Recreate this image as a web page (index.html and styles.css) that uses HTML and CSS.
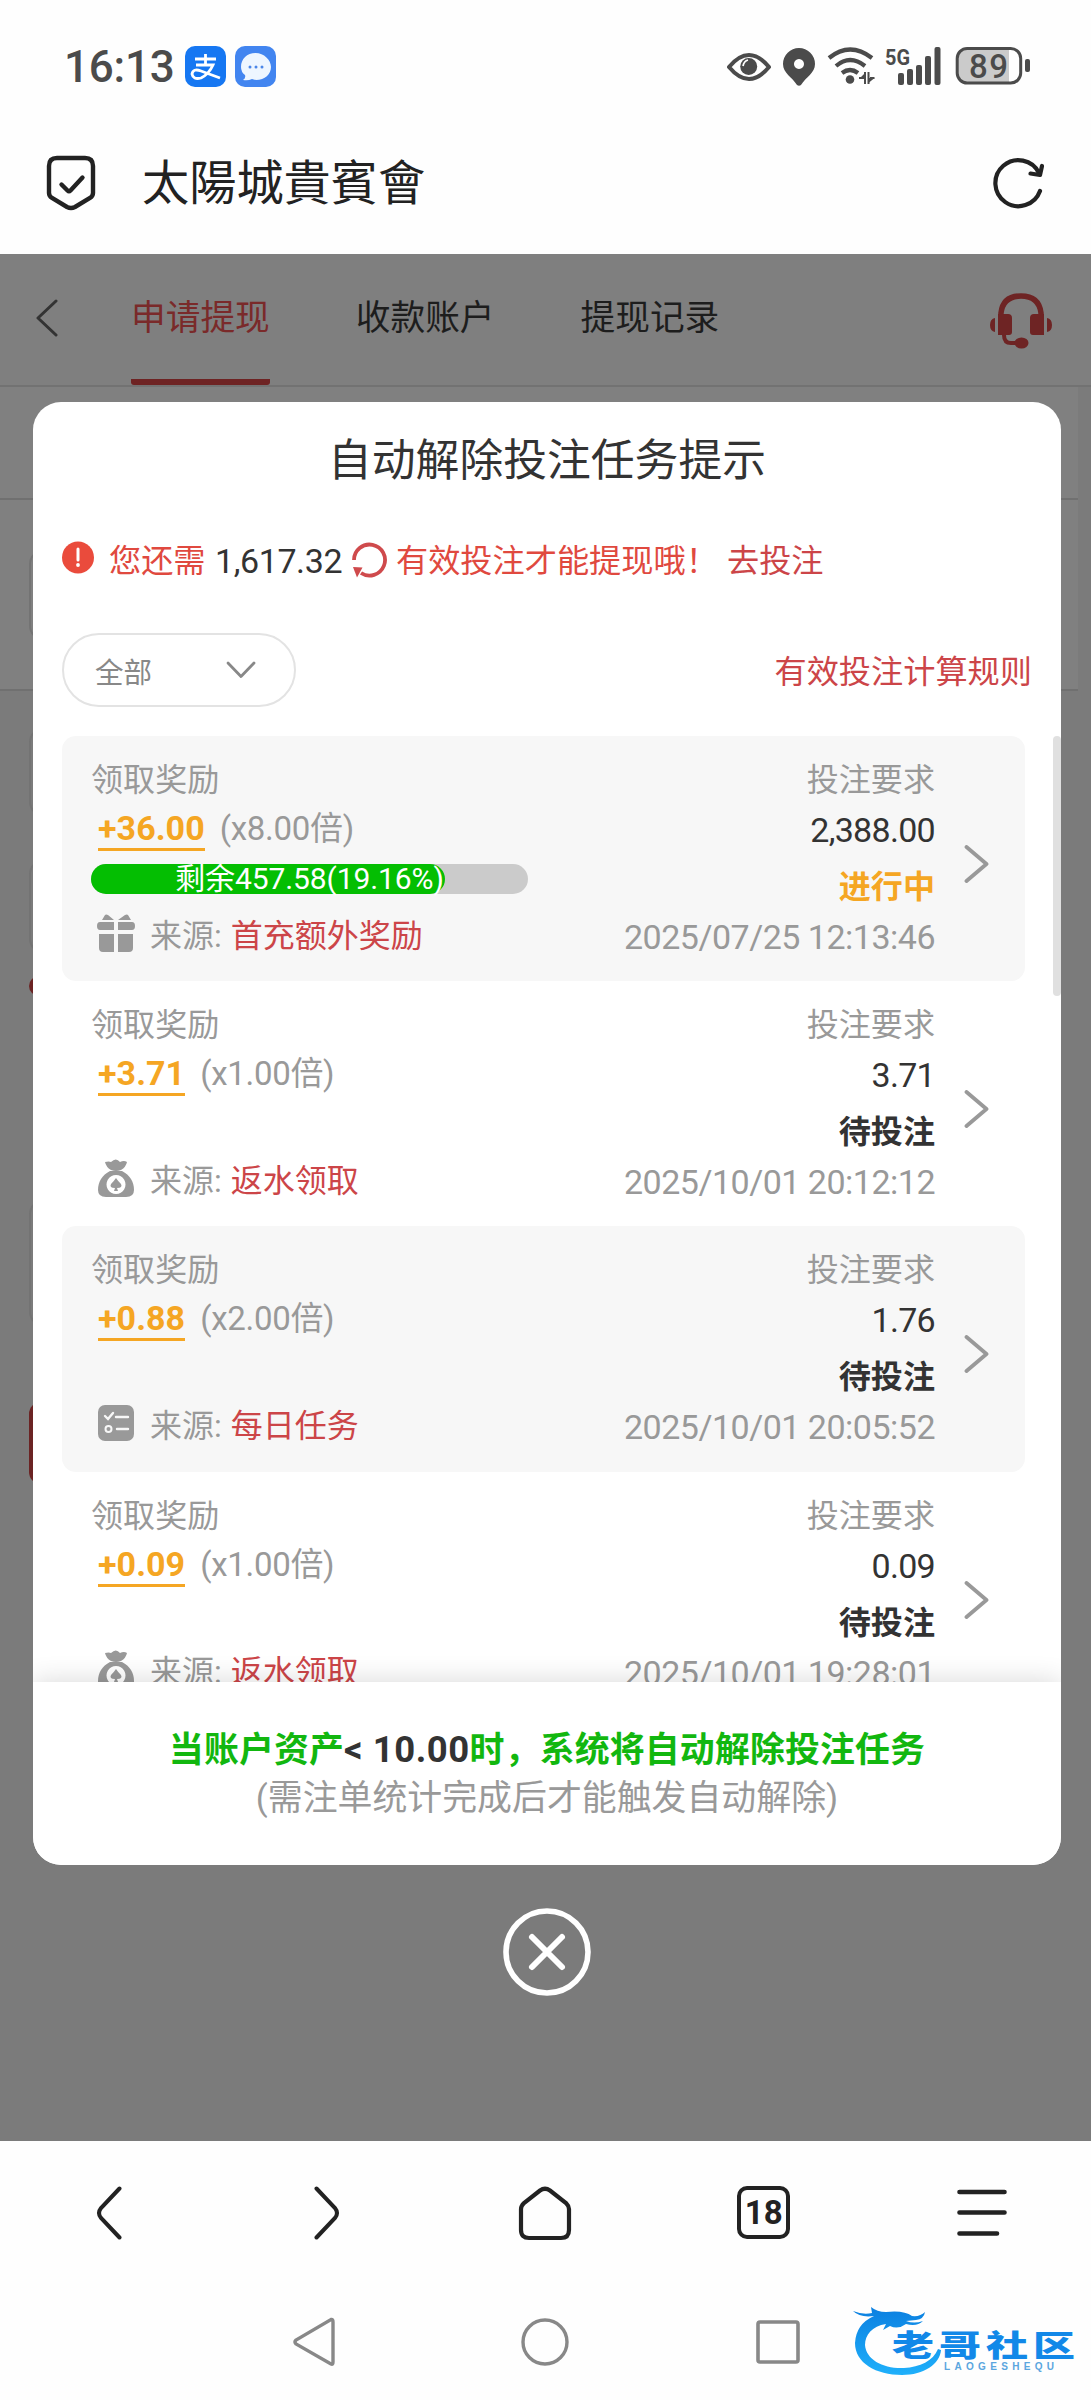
FILE: index.html
```html
<!DOCTYPE html>
<html lang="zh-CN">
<head>
<meta charset="utf-8">
<title>太陽城貴賓會</title>
<link rel="stylesheet" href="styles.css">
</head>
<body>
<svg width="0" height="0" class="defs">
  <symbol id="bag" viewBox="0 0 38 38">
    <path fill="currentColor" d="M8 3q4-1 6 0q5-5 9 0q4-2 7 0q-1 5-6 8q-5 2-10 0q-5-3-6-8z"/>
    <path fill="currentColor" fill-rule="evenodd" d="M13 12h12c8 4 12 11 12 19q0 7-8 7H9q-8 0-8-7c0-8 4-15 12-19zM19 16a9.500 9.500 0 1 0 .01 0z"/>
    <path fill="currentColor" d="M19 19q2 3 5 6q2 4-4 4l1 3h-4l1-3q-6 0-4-4q3-3 5-6z"/>
  </symbol>
  <symbol id="next" viewBox="0 0 24 38"><path d="M2 2L22 19L2 36" fill="none" stroke="#999" stroke-width="3.800" stroke-linecap="round" stroke-linejoin="round"/></symbol>
</svg>
<div class="phone">
  <div class="status">
    <span class="clock">16:13</span>
    <svg class="app" width="41" height="41" viewBox="0 0 41 41"><rect width="41" height="41" rx="10" fill="#1677f2"/><path d="M10 13H31M20.500 8v11M11 19H28Q24 28 16 32Q8 34 7 28Q8 22 16 25L35 32" fill="none" stroke="#fff" stroke-width="2.800"/></svg>
    <svg class="app" width="41" height="41" viewBox="0 0 41 41"><rect width="41" height="41" rx="10" fill="#4285f0"/><path d="M20.500 7C12 7 6 13 6 21q0 5 4 8q1 3-2 5q5 1 9-1q3 1 4 1c9 0 15-6 15-13S29 7 20.500 7z" fill="#eef6ff"/><g fill="#4a86e8"><circle cx="15" cy="21" r="1.500"/><circle cx="21" cy="21" r="1.500"/><circle cx="27" cy="21" r="1.500"/></g></svg>
    <svg class="signals" width="304" height="44" viewBox="727 44 304 44">
      <path d="M729 67Q749 43 769 67Q749 91 729 67z" fill="none" stroke="#4b4b4b" stroke-width="4" stroke-linejoin="round"/><circle cx="748.700" cy="66.500" r="8.500" fill="#4b4b4b"/><path d="M743 66q1-5 5-6" fill="none" stroke="#fff" stroke-width="1.800"/>
      <path d="M799 48a16 16 0 0 0-16 16c0 9 9 13 14 21q2 1.500 4 0c5-8 14-12 14-21a16 16 0 0 0-16-16zm0 11a5 5 0 1 1-.01 0z" fill="#4b4b4b" fill-rule="evenodd"/>
      <g fill="none" stroke="#4b4b4b" stroke-width="4.200"><path d="M829 58Q850 41 872 58"/><path d="M836 66Q850 54 865 66"/><path d="M842 73Q850 67 858 73"/></g><circle cx="850" cy="79.500" r="4.300" fill="#4b4b4b"/>
      <path d="M859 78h4.500M865 72v12M868.500 72v12M870 78h4.500" fill="none" stroke="#4b4b4b" stroke-width="2"/><path d="M859 79l6-6v6zM868.500 83l6-5h-6z" fill="#4b4b4b"/>
      <text x="885" y="65" class="fiveg" textLength="25" lengthAdjust="spacingAndGlyphs">5G</text>
      <g fill="#4b4b4b"><rect x="898" y="73" width="6" height="12" rx="2"/><rect x="907" y="69" width="6" height="16" rx="2"/><rect x="916" y="65" width="6" height="20" rx="2"/><rect x="925" y="56" width="6" height="29" rx="2"/><rect x="934.500" y="47" width="6" height="38" rx="2"/></g>
      <path d="M968 49h41v33h-41q-10 0-10-10v-13q0-10 10-10z" fill="#cbcbcb"/><rect x="957.200" y="48.500" width="63.500" height="34.500" rx="10" fill="none" stroke="#4b4b4b" stroke-width="3"/><rect x="1025" y="59" width="5" height="13" rx="2" fill="#4b4b4b"/>
      <text x="969" y="78" class="level" textLength="39">89</text>
    </svg>
  </div>
  <div class="address">
    <svg class="shield" width="50" height="56" viewBox="0 0 50 56"><path d="M11 3H39Q47 3 47 11V38Q47 41 44 43L29 52Q25 54 21 52L6 43Q3 41 3 38V11Q3 3 11 3z" fill="none" stroke="#222" stroke-width="4.400"/><path d="M15.500 29.500l6 6q1.500 1.500 3 0l12-13" fill="none" stroke="#222" stroke-width="4.400" stroke-linecap="round"/></svg>
    <span class="site">太陽城貴賓會</span>
    <svg class="reload" width="52" height="54" viewBox="0 0 52 54"><path d="M47 35A23 23 0 1 1 46 17" fill="none" stroke="#222" stroke-width="4.200" stroke-linecap="round"/><path d="M49 10L47 19L37.500 17.500" fill="none" stroke="#222" stroke-width="4.200" stroke-linecap="round" stroke-linejoin="round"/></svg>
  </div>

  <div class="stage">
    <div class="tabs">
      <svg class="back" width="22" height="38" viewBox="0 0 22 38"><path d="M20 2L2 19L20 36" fill="none" stroke="#333" stroke-width="3" stroke-linecap="round" stroke-linejoin="round"/></svg>
      <span class="tab on">申请提现</span><span class="tab">收款账户</span><span class="tab">提现记录</span>
      <svg class="headset" width="62" height="56" viewBox="0 0 62 56"><path d="M11 24V20Q13 3 31 3T51 20V24" fill="none" stroke="#6e2424" stroke-width="5.500"/><path d="M8 21H18q4 0 4 4V39q0 3-3 3H8zM54 21H44q-4 0-4 4V39q0 3 3 3h11zM5 25v14q-5-1-5-7t5-7zM57 25v14q5-1 5-7t-5-7z" fill="#6e2424"/><path d="M14 42Q14 50 21 50H28" fill="none" stroke="#6e2424" stroke-width="4"/><ellipse cx="31.500" cy="50" rx="7" ry="5.500" fill="#6e2424"/></svg>
    </div>
    <div class="panel head"></div>
    <div class="panel field"><div class="box"></div></div>
    <div class="form">
      <div class="box a"></div><div class="box b"></div><div class="dot"></div><div class="box c"></div><div class="submit"></div>
    </div>

    <div class="modal">
      <h1>自动解除投注任务提示</h1>
      <div class="notice">
        <svg class="warn" width="32" height="33" viewBox="0 0 32 33"><circle cx="16" cy="16.500" r="16" fill="#ea4b3c"/><path d="M16 8v11" stroke="#fff" stroke-width="3" stroke-linecap="round"/><circle cx="16" cy="24" r="1.900" fill="#fff"/></svg>
        <span class="need">您还需</span><span class="sum">1,617.32</span>
        <svg class="sync" width="35" height="36" viewBox="0 0 35 36"><path d="M2 18A15.500 15.500 0 1 1 9 31" fill="none" stroke="#cf4a4c" stroke-width="3.800"/><path d="M1 25L10.500 25.500L5 35.500z" fill="#cf4a4c"/></svg>
        <span class="must">有效投注才能提现哦！</span><span class="go">去投注</span>
      </div>
      <div class="filter">
        <div class="select">全部<svg width="30" height="18" viewBox="0 0 30 18"><path d="M2 2L15 15.500L28 2" fill="none" stroke="#888" stroke-width="2.800" stroke-linecap="round" stroke-linejoin="round"/></svg></div>
        <span class="rules">有效投注计算规则</span>
      </div>
      <div class="list">
        <div class="item shade">
          <div class="left">
            <div class="label">领取奖励</div>
            <div class="reward"><b>+36.00</b><span>(x8.00倍)</span></div>
            <div class="bar"><div class="fill" style="width:81%"></div><span>剩余457.58(19.16%)</span></div>
            <div class="source"><svg width="38" height="38" viewBox="0 0 38 38"><path fill="#999" d="M5 6l3-5q1-1 3 0l6 5zM21 6l7-5q2-1 3 0l3 5zM3 8h14v8H3q-3 0-3-4t3-4zm18 0h14q3 0 3 4t-3 4H21zM2 20h15v18H6q-4 0-4-4zm19 0h15v14q0 4-4 4H21z"/></svg>来源:<em>首充额外奖励</em></div>
          </div>
          <div class="right"><div class="label">投注要求</div><div class="value">2,388.00</div><div class="state active">进行中</div><div class="date">2025/07/25 12:13:46</div></div>
          <svg class="next" width="25" height="38"><use href="#next"/></svg>
        </div>
        <div class="item">
          <div class="left">
            <div class="label">领取奖励</div>
            <div class="reward"><b>+3.71</b><span>(x1.00倍)</span></div>
            <div class="bar none"></div>
            <div class="source"><svg width="38" height="38"><use href="#bag"/></svg>来源:<em>返水领取</em></div>
          </div>
          <div class="right"><div class="label">投注要求</div><div class="value">3.71</div><div class="state">待投注</div><div class="date">2025/10/01 20:12:12</div></div>
          <svg class="next" width="25" height="38"><use href="#next"/></svg>
        </div>
        <div class="item shade">
          <div class="left">
            <div class="label">领取奖励</div>
            <div class="reward"><b>+0.88</b><span>(x2.00倍)</span></div>
            <div class="bar none"></div>
            <div class="source"><svg width="38" height="38" viewBox="0 0 38 38"><rect x="1" y="1" width="36" height="36" rx="7" fill="#999"/><path d="M8 12l3 3l5-6M19 13h12M20 25h11" fill="none" stroke="#f7f7f7" stroke-width="2.400" stroke-linecap="round"/><circle cx="11.500" cy="25" r="3" fill="none" stroke="#f7f7f7" stroke-width="2"/></svg>来源:<em>每日任务</em></div>
          </div>
          <div class="right"><div class="label">投注要求</div><div class="value">1.76</div><div class="state">待投注</div><div class="date">2025/10/01 20:05:52</div></div>
          <svg class="next" width="25" height="38"><use href="#next"/></svg>
        </div>
        <div class="item">
          <div class="left">
            <div class="label">领取奖励</div>
            <div class="reward"><b>+0.09</b><span>(x1.00倍)</span></div>
            <div class="bar none"></div>
            <div class="source"><svg width="38" height="38"><use href="#bag"/></svg>来源:<em>返水领取</em></div>
          </div>
          <div class="right"><div class="label">投注要求</div><div class="value">0.09</div><div class="state">待投注</div><div class="date">2025/10/01 19:28:01</div></div>
          <svg class="next" width="25" height="38"><use href="#next"/></svg>
        </div>
        <div class="thumb"></div>
      </div>
      <div class="foot">
        <div class="rule">当账户资产<span>&lt; 10.00</span>时，系统将自动解除投注任务</div>
        <div class="hint">(需注单统计完成后才能触发自动解除)</div>
      </div>
    </div>
    <svg class="close" width="88" height="88" viewBox="0 0 88 88"><circle cx="44" cy="44" r="41" fill="none" stroke="#fff" stroke-width="5.600"/><path d="M29 29L59 59M59 29L29 59" stroke="#fff" stroke-width="6" stroke-linecap="round"/></svg>
  </div>

  <div class="toolbar">
    <svg width="26" height="56" viewBox="0 0 26 56"><path d="M23.500 3.500L5 23Q1 28 5 33L23.500 52.500" fill="none" stroke="#222" stroke-width="4" stroke-linecap="round"/></svg>
    <svg width="26" height="56" viewBox="0 0 26 56"><path d="M2.500 3.500L21 23Q25 28 21 33L2.500 52.500" fill="none" stroke="#222" stroke-width="4" stroke-linecap="round"/></svg>
    <svg width="54" height="56" viewBox="0 0 54 56"><path d="M22 5.500Q27 2 32 5.500L48 18Q51 21 51 24V45Q51 53 43 53H11Q3 53 3 45V24Q3 21 6 18z" fill="none" stroke="#222" stroke-width="4.200"/></svg>
    <span class="count">18</span>
    <svg width="50" height="48" viewBox="0 0 50 48"><path d="M2.500 3H47.500M2.500 23.500H47.500M2.500 44.500H40" stroke="#222" stroke-width="4.600" stroke-linecap="round"/></svg>
  </div>
  <div class="system">
    <svg class="tri" width="42" height="50" viewBox="0 0 42 50"><path d="M38 2.500Q40 2 40 5V45Q40 48 38 47L3 27Q1 25 3 23z" fill="none" stroke="#888" stroke-width="3.400"/></svg>
    <svg class="round" width="48" height="48" viewBox="0 0 48 48"><circle cx="24" cy="24" r="22" fill="none" stroke="#888" stroke-width="3.400"/></svg>
    <svg class="square" width="44" height="44" viewBox="0 0 44 44"><rect x="2" y="2" width="40" height="40" rx="2" fill="none" stroke="#888" stroke-width="3.600"/></svg>
    <svg class="brand" width="232" height="80" viewBox="850 2300 232 80">
      <defs><linearGradient id="blue" x1="0" y1="0" x2="0" y2="1"><stop offset="0" stop-color="#0b7fe0"/><stop offset="1" stop-color="#1fb0fb"/></linearGradient></defs>
      <path fill="url(#blue)" d="M853 2309Q863 2313 872 2311L871 2305Q877 2310 886 2310Q904 2308 912 2314Q920 2315 925 2310Q924 2317 916 2318L906 2319Q914 2322 923 2319Q917 2325 906 2322Q898 2328 890 2324L883 2328L886 2322C872 2324 865 2333 865 2343C866 2358 884 2367 904 2366C920 2365 933 2359 938 2347L941 2348C940 2362 924 2373 902 2373C876 2373 855 2361 855 2341Q856 2322 874 2314Q860 2316 853 2309z"/>
      <g transform="translate(0 2354) scale(1 .7)"><text class="brandname" x="892" y="0" fill="#1288e8">老哥社区</text></g>
      <text class="brandsub" x="944" y="2368" textLength="110">LAOGESHEQU</text>
    </svg>
  </div>
</div>
</body>
</html>
```
FILE: styles.css
```css
* { box-sizing: border-box; }
body { margin: 0; background: #fff; font-family: Roboto, "Noto Sans CJK SC", sans-serif; color: #333; }
svg { display: block; flex: none; }
.defs { position: absolute; }
.phone { width: 1091px; height: 2400px; overflow: hidden; background: #fefefe; }

.status { display: flex; align-items: center; height: 132px; padding-left: 64px; }
.clock { width: 121px; margin-top: 2px; font-size: 44px; font-weight: 500; color: #4b4b4b; letter-spacing: -.2px; white-space: nowrap; }
.app { margin-right: 9px; }
.signals { margin-left: 442px; }
.fiveg { font: 700 22px Roboto, sans-serif; fill: #4b4b4b; }
.level { font: 500 33px Roboto, sans-serif; fill: #4b4b4b; }

.address { display: flex; align-items: center; height: 122px; padding: 0 46px 20px 46px; }
.site { margin: 2px 0 0 46px; font-size: 47.200px; line-height: 60px; color: #222; }
.reload { margin-left: auto; }

.stage { position: relative; height: 1887px; background: #7b7b7b; }
.tabs { display: flex; align-items: center; height: 133px; padding: 0 39px 0 36px; background: #7f7f7f; border-bottom: 2px solid #727272; }
.back { margin: -3px 73px 0 0; }
.tab { height: 131px; margin-right: 86px; padding-bottom: 2px; font-size: 34.700px; line-height: 129px; color: #1d1d1d; white-space: nowrap; border-bottom: 6px solid transparent; }
.tab.on { color: #7a2a2a; border-bottom-color: #6e2323; border-radius: 3px; }
.headset { margin: 2px 0 0 auto; }
.panel { width: 1078px; background: #808080; border-bottom: 2px solid #707070; }
.head { height: 113px; }
.field { height: 191px; padding: 50px 29px; }
.box { width: 1020px; border: 2px solid #737373; border-radius: 14px; }
.field .box { height: 90px; }
.form { padding: 37px 29px; }
.a { height: 88px; margin-bottom: 44px; }
.b { height: 93px; margin-bottom: 23px; }
.dot { width: 20px; height: 20px; margin-bottom: 204px; border-radius: 50%; background: #6b2323; }
.c { height: 126px; margin-bottom: 76px; }
.submit { width: 1020px; height: 82px; border-radius: 12px; background: #6b2323; }

.modal { position: absolute; left: 33px; top: 148px; width: 1028px; height: 1463px; display: flex; flex-direction: column; overflow: hidden; background: #fff; border-radius: 28px; }
h1 { margin: 0; padding-top: 29px; height: 128px; font-size: 43.800px; font-weight: 400; line-height: 60px; text-align: center; }
.notice { display: flex; align-items: center; height: 60px; padding: 2px 0 0 29px; font-size: 32.200px; line-height: 48px; white-space: nowrap; color: #e0493f; }
.warn { margin-top: -7px; }
.sync { margin-top: -2px; }
.need { margin-left: 15px; width: 106px; }
.sum { width: 137px; font-size: 34px; letter-spacing: -.4px; color: #333; }
.must { width: 331px; margin-left: 9px; }
.go, .rules, em { color: #cc4548; font-style: normal; }
.filter { display: flex; justify-content: space-between; align-items: center; height: 72px; margin: 44px 29px 30px; }
.select { display: flex; align-items: center; justify-content: space-between; width: 234px; height: 74px; padding: 0 38px 0 31px; border: 2px solid #e3e3e3; border-radius: 37px; font-size: 28.500px; color: #888; }
.rules { margin-top: -2px; font-size: 32.200px; }

.list { position: relative; height: 946px; overflow: hidden; padding-left: 29px; }
.item { display: flex; width: 963px; height: 245.200px; padding: 22px 36px 0 29px; border-radius: 14px; font-size: 32.100px; color: #999; white-space: nowrap; }
.shade { background: #f7f7f7; }
.left { width: 439px; }
.label { height: 44px; line-height: 44px; }
.reward { display: flex; height: 62px; padding: 8px 0 0 7px; line-height: 38px; }
.reward b { height: 41px; margin-right: 15px; border-bottom: 3px solid #f5a623; color: #f5a623; font-size: 34px; line-height: 36px; letter-spacing: .05px; }
.reward span { font-size: 33px; line-height: 37px; letter-spacing: -.3px; }
.bar { position: relative; width: 437px; height: 30px; border-radius: 15px; background: #cbcbcb; }
.bar.none { background: none; }
.fill { height: 30px; border-radius: 15px; background: #04be02; }
.bar span { position: absolute; inset: 0; text-align: center; font-size: 30px; line-height: 30px; letter-spacing: -.1px; color: #fff; }
.source { display: flex; align-items: center; height: 46px; margin-top: 16px; padding-left: 6px; font-size: 32px; }
.source svg { margin-right: 15px; }
em { margin-left: 9px; }
.right { flex: 1; text-align: right; }
.value { height: 52px; padding-top: 2px; line-height: 52px; font-size: 34px; letter-spacing: -.7px; color: #333; }
.state { height: 60px; padding-top: 5px; line-height: 56px; font-weight: 700; color: #333; }
.active { color: #f5a623; }
.date { height: 46px; line-height: 46px; font-size: 34px; letter-spacing: -.5px; }
.next { margin: 87px 0 0 29px; }
.thumb { position: absolute; right: 0; top: 0; width: 8px; height: 260px; border-radius: 4px; background: #e0e0e0; }

.foot { position: relative; flex: 1; padding-top: 44px; text-align: center; background: #fff; box-shadow: 0 0 26px rgba(0, 0, 0, .16); font-size: 34.900px; line-height: 48px; white-space: nowrap; }
.rule { color: #12b70f; font-weight: 700; letter-spacing: .15px; }
.rule span { color: #333; font-size: 36.500px; letter-spacing: .5px; }
.hint { color: #999; }
.close { position: absolute; left: 502.500px; top: 1654px; }

.toolbar { display: grid; grid-template-columns: repeat(5, 1fr); align-items: center; justify-items: center; height: 143px; }
.count { width: 53px; height: 53px; border: 4px solid #222; border-radius: 10px; font-size: 33px; font-weight: 700; line-height: 45px; text-align: center; color: #222; }
.system { display: flex; align-items: center; height: 116px; padding-left: 293px; }
.round { margin-left: 186px; }
.square { margin-left: 187px; }
.brand { margin-left: 50px; }
.brandname { font: 900 42px "Noto Sans CJK SC", sans-serif; letter-spacing: 5px; }
.brandsub { font: 700 10px "Liberation Sans", sans-serif; fill: #5ba6df; }
```
